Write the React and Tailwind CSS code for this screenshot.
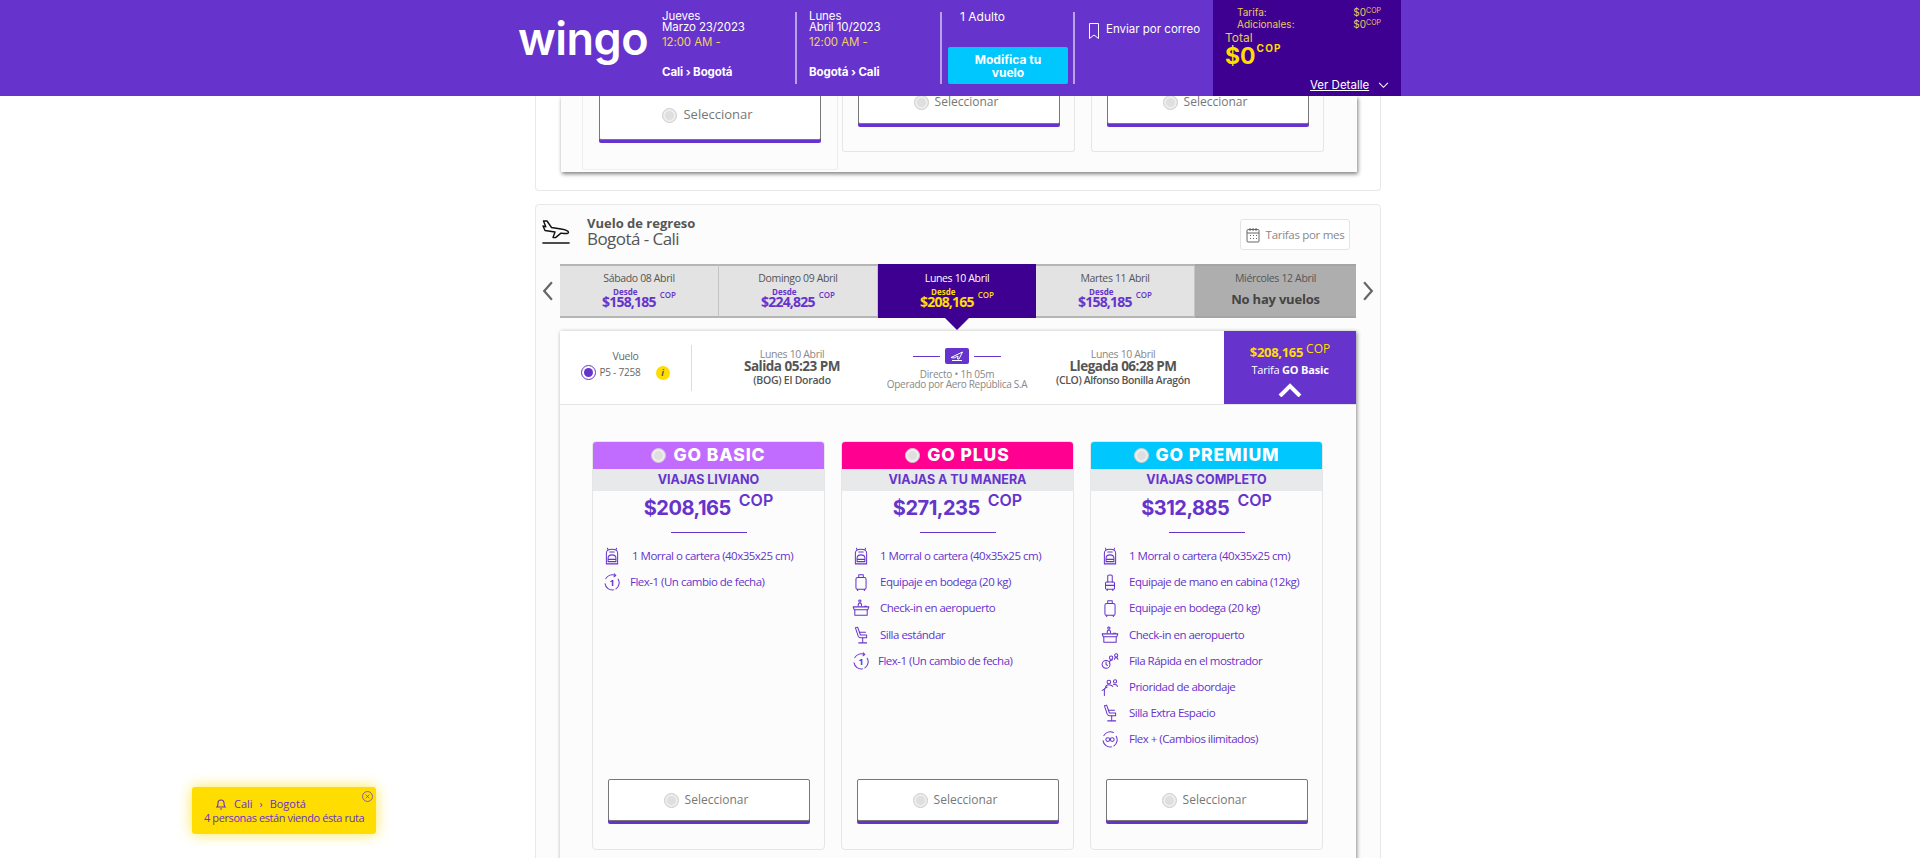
const PURPLE = "#6633cc";

function Ico({ children, className = "w-[18px] h-[18px]" }) {
  return (
    <svg viewBox="0 0 16 16" fill="none" stroke={PURPLE} strokeWidth="0.9" strokeLinecap="round" strokeLinejoin="round" className={className}>
      {children}
    </svg>
  );
}

const Backpack = () => (
  <Ico>
    <path d="M3 5.5C3 3 5 2 8 2s5 1 5 3.5V15H3z" />
    <path d="M4.5 2.5 4 1M11.5 2.5 12 1M6 4.5h4" />
    <path d="M4.5 13V10c0-2 1.5-3 3.5-3s3.5 1 3.5 3v3zM4.5 11h7" />
  </Ico>
);
const Suitcase = () => (
  <Ico>
    <rect x="3.5" y="4" width="9" height="10.5" rx="1.5" />
    <path d="M6 4V1.5h4V4M5 14.5V16M11 14.5V16" />
  </Ico>
);
const CabinBag = () => (
  <Ico>
    <path d="M6 8V2.5C6 1.5 10 1.5 10 2.5V8" />
    <rect x="4" y="8" width="8" height="6.5" rx="1" />
    <path d="M4 11h8M5.5 14.5V16M10.5 14.5V16" />
  </Ico>
);
const Desk = () => (
  <Ico>
    <circle cx="7" cy="1.8" r="1" />
    <path d="M5.5 6c0-1.5.7-2.5 1.5-2.5S8.5 4.5 8.5 6M11 6.5h2" />
    <path d="M1 7h14l-1 2.5H2zM2.5 9.5v5h11v-5" />
  </Ico>
);
const Seat = () => (
  <Ico>
    <path d="M3 1.5 5 1 7.5 8H13v2.5H7.5c-1 0-1.5-.5-2-1.5z" />
    <path d="M6.5 5.5H12M9.5 10.5V14M6 15h7" />
  </Ico>
);
const Flex = ({ label = "1" }) => (
  <Ico>
    <path d="M2.5 5A6.5 6.5 0 0 1 11 2.2M13.5 5.5a6.5 6.5 0 0 1-2 8.6M9.5 15A6.5 6.5 0 0 1 1.8 9.5" />
    <path d="M10 .8 11.4 2.3 9.7 3.4" />
    <text x="8" y="11.5" fontSize="8" fontWeight="700" textAnchor="middle" fill={PURPLE} stroke="none">{label}</text>
  </Ico>
);
const FlexPlus = () => (
  <Ico>
    <path d="M2.5 5A6.5 6.5 0 0 1 11 2.2M13.5 5.5a6.5 6.5 0 0 1-2 8.6M9.5 15A6.5 6.5 0 0 1 1.8 9.5" />
    <circle cx="6" cy="8.5" r="1.7" />
    <circle cx="10" cy="8.5" r="1.7" />
  </Ico>
);
const Fila = () => (
  <Ico>
    <circle cx="4.5" cy="11" r="3.5" />
    <path d="M4.5 9v2l1.2 1" />
    <circle cx="9" cy="5" r="1.5" />
    <circle cx="13.5" cy="3" r="1.4" />
    <path d="M7.5 10c0-2 1-3 2.5-3M12 6.5c0-1 .5-1.5 1.5-1.5s1.5.5 1.5 1.5" />
  </Ico>
);
const Prioridad = () => (
  <Ico>
    <circle cx="7" cy="3.5" r="1.6" />
    <circle cx="12.5" cy="3" r="1.4" />
    <path d="M4 9c0-2 1.5-3 3-3s2.5 .5 3.5 1.5M11 5.5c2 0 3.5 .5 3.5 2M1 11l2-1v5.5M3 9.5 5.5 8" />
  </Ico>
);

function Radio({ size = "w-[15px] h-[15px]" }) {
  return (
    <span className={`${size} shrink-0 rounded-full bg-[#dfdfdf] border border-[#cfcfcf] shadow-[inset_0_0_0_2px_#eeeeee]`} />
  );
}

function SelectButton({ className, textClass = "text-[12px]" }) {
  return (
    <div className={`flex items-center justify-center gap-[6px] pr-[5px] bg-white border border-[#777777] rounded-[2px] shadow-[0_3px_0_#6633cc] ${className}`}>
      <Radio size="w-[15px] h-[15px]" />
      <span className={`${textClass} text-[#777777]`}>Seleccionar</span>
    </div>
  );
}

const fares = [
  {
    name: "GO BASIC",
    tagline: "VIAJAS LIVIANO",
    price: "$208,165",
    color: "bg-[#c26cff]",
    items: [
      [Backpack, "1 Morral o cartera (40x35x25 cm)", "ml-[11px]"],
      [Flex, "Flex-1 (Un cambio de fecha)", "ml-[9px]"],
    ],
  },
  {
    name: "GO PLUS",
    tagline: "VIAJAS A TU MANERA",
    price: "$271,235",
    color: "bg-[#ff0090]",
    items: [
      [Backpack, "1 Morral o cartera (40x35x25 cm)", "ml-[10px]"],
      [Suitcase, "Equipaje en bodega (20 kg)", "ml-[10px]"],
      [Desk, "Check-in en aeropuerto", "ml-[10px]"],
      [Seat, "Silla estándar", "ml-[10px]"],
      [Flex, "Flex-1 (Un cambio de fecha)", "ml-[8px]"],
    ],
  },
  {
    name: "GO PREMIUM",
    tagline: "VIAJAS COMPLETO",
    price: "$312,885",
    color: "bg-[#00c8ff]",
    items: [
      [Backpack, "1 Morral o cartera (40x35x25 cm)", "ml-[10px]"],
      [CabinBag, "Equipaje de mano en cabina (12kg)", "ml-[10px]"],
      [Suitcase, "Equipaje en bodega (20 kg)", "ml-[10px]"],
      [Desk, "Check-in en aeropuerto", "ml-[10px]"],
      [Fila, "Fila Rápida en el mostrador", "ml-[10px]"],
      [Prioridad, "Prioridad de abordaje", "ml-[10px]"],
      [Seat, "Silla Extra Espacio", "ml-[10px]"],
      [FlexPlus, "Flex + (Cambios ilimitados)", "ml-[10px]"],
    ],
  },
];

const days = [
  { label: "Sábado 08 Abril", price: "$158,185", w: "w-[159px]" },
  { label: "Domingo 09 Abril", price: "$224,825", w: "w-[159px]" },
  { label: "Lunes 10 Abril", price: "$208,165", w: "w-[158px]", active: true },
  { label: "Martes 11 Abril", price: "$158,185", w: "w-[159px]" },
  { label: "Miércoles 12 Abril", w: "w-[161px]", empty: true },
];

function DayTab({ day }) {
  const bg = day.active ? "bg-[#3d0090] border-[#3d0090]" : day.empty ? "bg-[#aeaeae] border-[#a5a5a5]" : "bg-[#e3e3e3] border-[#b5b5b5] border-r-[#c4c4c4] border-r";
  return (
    <div className={`${day.w} h-[54px] border-y-2 ${bg} flex flex-col items-center pt-[5px] relative`}>
      <div className={`text-[10.5px] tracking-[-0.35px] leading-[14px] ${day.active ? "text-white" : "text-[#555555]"}`}>{day.label}</div>
      {day.empty ? (
        <div className="text-[13px] font-bold tracking-[-0.2px] text-[#444444] mt-[5px]">No hay vuelos</div>
      ) : (
        <div className={`relative flex items-start gap-[4px] mt-[3px] ${day.active ? "text-[#ffdd00]" : "text-[#6633cc]"}`}>
          <div className="flex flex-col items-center">
            <span className="text-[8px] font-bold leading-[8px] pl-[11px] self-start">Desde</span>
            <span className="text-[14px] font-bold tracking-[-0.8px] leading-[12px]">{day.price}</span>
          </div>
          <span className="text-[8px] font-semibold leading-[8px] mt-[3px]">COP</span>
        </div>
      )}
      {day.active && (
        <span className="absolute left-1/2 -translate-x-1/2 top-[52px] w-0 h-0 border-x-[12px] border-x-transparent border-t-[12px] border-t-[#3d0090]" />
      )}
    </div>
  );
}

function FareCard({ fare }) {
  return (
    <div className="w-[233px] h-[409px] border border-[#e6e6e6] rounded-[4px] bg-[#fcfcfc] flex flex-col overflow-hidden">
      <div className={`${fare.color} h-[27px] flex items-center justify-center gap-[7px] shrink-0`}>
        <Radio />
        <span className="font-['Inter'] text-[17.5px] font-extrabold tracking-[0.9px] text-white whitespace-nowrap">{fare.name}</span>
      </div>
      <div className="h-[22px] shrink-0 bg-[#e8e9eb] flex items-center justify-center font-['Inter'] text-[12.5px] font-bold text-[#6633cc]">
        {fare.tagline}
      </div>
      <div className="flex justify-center items-start text-[#6633cc] font-['Inter'] h-[41px] pt-[1px] shrink-0">
        <span className="text-[20px] font-bold tracking-[-0.5px] leading-[28px] mt-[2px]">{fare.price}</span>
        <span className="text-[16px] font-semibold leading-[16px] ml-[8px]">COP</span>
      </div>
      <div className="w-[76px] h-px bg-[#6633cc] mx-auto shrink-0" />
      <div className="pt-[10px] flex-1">
        {fare.items.map(([Icon, label, gap]) => (
          <div key={label} className="h-[26.2px] flex items-center pl-[10px]">
            <span className="w-[18px] flex justify-center shrink-0"><Icon /></span>
            <span className={`${gap} text-[11.5px] tracking-[-0.5px] leading-[14px] text-[#6633cc] whitespace-nowrap`}>{label}</span>
          </div>
        ))}
      </div>
      <SelectButton className="w-[202px] h-[42px] mx-auto mb-[28px] shrink-0" />
    </div>
  );
}

function TripCol({ day, date, route }) {
  return (
    <div className="text-[11.5px] tracking-[-0.1px] leading-[11px] text-white">
      <div>{day}</div>
      <div>{date}</div>
      <div className="text-[#f0d060] mt-[2px] leading-[14px]">12:00 AM -</div>
      <div className="font-bold mt-[17px] leading-[12px]">{route}</div>
    </div>
  );
}

function Header() {
  return (
    <header className="h-[96px] bg-[#6633cc] flex font-['Inter'] relative z-10">
      <div className="w-[518px]" />
      <div className="w-[144px] text-[45px] font-semibold text-white leading-[45px] pt-[16px] tracking-[-0.5px]">wingo</div>
      <div className="w-[133px] pt-[11px]"><TripCol day="Jueves" date="Marzo 23/2023" route="Cali › Bogotá" /></div>
      <div className="w-[2px] h-[72px] mt-[12px] bg-[#b9a3e8]" />
      <div className="w-[143px] pl-[12px] pt-[11px]"><TripCol day="Lunes" date="Abril 10/2023" route="Bogotá › Cali" /></div>
      <div className="w-[2px] h-[72px] mt-[12px] bg-[#b9a3e8]" />
      <div className="w-[131px] pl-[6px] pt-[11px] text-white text-[12px] leading-[12px]">
        <div className="pl-[12px]">1 Adulto</div>
        <div className="w-[120px] h-[37px] mt-[24px] bg-[#00c8ff] rounded-[2px] flex items-center justify-center text-center text-[12px] leading-[13px] font-bold">
          Modifica tu<br />vuelo
        </div>
      </div>
      <div className="w-[2px] h-[72px] mt-[12px] bg-[#b9a3e8]" />
      <div className="w-[138px] flex items-start gap-[6px] pl-[13px] pt-[23px] text-white text-[11.5px] leading-[12px]">
        <svg viewBox="0 0 12 16" fill="none" stroke="white" strokeWidth="1" className="w-[12px] h-[16px] shrink-0">
          <path d="M1.5.5h9V15.5L6 12l-4.5 3.5z" />
        </svg>
        <span className="whitespace-nowrap">Enviar por correo</span>
      </div>
      <div className="w-[188px] bg-[#3d0090] relative pl-[12px]">
        <div className="pl-[12px] pt-[6px] pr-[20px] text-[10px] leading-[12px] text-[#e8c860]">
          <div className="flex justify-between"><span>Tarifa:</span><span>$0<sup className="text-[7px]">COP</sup></span></div>
          <div className="flex justify-between"><span>Adicionales:</span><span>$0<sup className="text-[7px]">COP</sup></span></div>
        </div>
        <div className="text-[12px] leading-[14px] text-[#e8c860] mt-[1px]">Total</div>
        <div className="flex items-start text-[#ffdd00] font-bold">
          <span className="text-[23px] leading-[22px]">$0</span>
          <span className="text-[10px] leading-[12px] tracking-[1.2px] ml-[1px] mt-[-3px]">COP</span>
        </div>
        <div className="absolute left-[97px] top-[78px] flex items-center gap-[8px] text-white text-[11.5px] leading-[14px]">
          <span className="underline">Ver Detalle</span>
          <svg viewBox="0 0 12 8" fill="none" stroke="white" strokeWidth="1.2" className="w-[11px] h-[7px] ml-[1px]"><path d="M1 1l5 5 5-5" /></svg>
        </div>
      </div>
    </header>
  );
}

function PlaneLanding() {
  return (
    <svg viewBox="0 0 28 24" fill="none" stroke="#111111" strokeWidth="1.4" strokeLinejoin="round" strokeLinecap="round" className="w-[28px] h-[24px]">
      <path d="M1.5 1 5 1 9.5 7.5 19 9c4 .6 7.5 2 7.5 3.5 0 1-2 1.2-4.5 1l-3-.4-5.5 4.5h-2.5L13 12 3 10.5 1 6 3.8 6.8z" />
      <path d="M1 23h26" strokeWidth="1.6" />
    </svg>
  );
}

export default function App() {
  return (
    <div className="relative w-[1920px] h-[858px] overflow-hidden bg-white font-['Open_Sans',sans-serif]">
      <Header />

      <main className="w-[846px] ml-[535px]">
        <section className="h-[95px] border-x border-b border-[#e8e8e8] rounded-b-[4px] bg-white">
          <div className="ml-[25px] w-[796px] h-[76px] flex bg-[#fcfcfc] shadow-[1px_2px_4px_rgba(0,0,0,0.5)] overflow-hidden">
            <div className="ml-[21px] w-[256px] h-[74px] border border-t-0 border-[#eeeeee] rounded-b-[3px] flex flex-col justify-end items-center pb-[29px]">
              <SelectButton className="w-[222px] h-[50px] shrink-0" textClass="text-[13px]" />
            </div>
            <div className="ml-[4px] w-[233px] h-[56px] border border-t-0 border-[#e6e6e6] rounded-b-[3px] flex flex-col justify-end items-center pb-[27px] bg-[#fcfcfc]">
              <SelectButton className="w-[202px] h-[44px] shrink-0" />
            </div>
            <div className="ml-[16px] w-[233px] h-[56px] border border-t-0 border-[#e6e6e6] rounded-b-[3px] flex flex-col justify-end items-center pb-[27px] bg-[#fcfcfc]">
              <SelectButton className="w-[202px] h-[44px] shrink-0" />
            </div>
          </div>
        </section>

        <section className="mt-[13px] h-[700px] border border-[#e8e8e8] rounded-[4px] bg-[#fcfcfc]">
          <div className="h-[59px] flex items-start relative">
            <div className="ml-[6px] mt-[15px]"><PlaneLanding /></div>
            <div className="ml-[17px] mt-[11px] text-[#555555]">
              <div className="text-[13px] font-bold leading-[15px]">Vuelo de regreso</div>
              <div className="text-[17px] tracking-[-0.55px] leading-[15px]">Bogotá - Cali</div>
            </div>
            <div className="absolute left-[704px] top-[14px] w-[110px] h-[31px] bg-white border border-[#e4e4e4] rounded-[3px] flex items-center justify-center gap-[6px] text-[11.5px] tracking-[-0.3px] text-[#888888]">
              <svg viewBox="0 0 14 16" fill="none" stroke="#666666" strokeWidth="1" className="w-[14px] h-[16px]">
                <rect x="1" y="2.5" width="12" height="12.5" rx="1" />
                <path d="M1 6h12M4 1v3M7 1v3M10 1v3M4 8.5h1M7 8.5h1M10 8.5h1M4 11.5h1M7 11.5h1M10 11.5h1" />
              </svg>
              <span className="whitespace-nowrap">Tarifas por mes</span>
            </div>
          </div>

          <div className="flex items-center h-[54px] relative">
            <svg viewBox="0 0 10 18" fill="none" stroke="#666666" strokeWidth="2" className="w-[11px] h-[20px] ml-[6px] shrink-0"><path d="M9 1 2 9l7 8" /></svg>
            <div className="flex ml-[7px]">
              {days.map((d) => <DayTab key={d.label} day={d} />)}
            </div>
            <svg viewBox="0 0 10 18" fill="none" stroke="#666666" strokeWidth="2" className="w-[11px] h-[20px] ml-[7px] shrink-0"><path d="M1 1l7 8-7 8" /></svg>
          </div>

          <div className="mt-[13px] ml-[24px] w-[796px] h-[560px] bg-[#fcfcfc] shadow-[1px_1px_4px_rgba(0,0,0,0.45)]">
            <div className="h-[74px] flex border-b border-[#e4e4e4] bg-white">
              <div className="w-[132px] h-[46px] mt-[14px] border-r border-[#dddddd] flex flex-col items-center text-[#666666]">
                <div className="text-[10.5px] tracking-[-0.3px] leading-[14px] mt-[4px]">Vuelo</div>
                <div className="flex items-center mt-[2px]">
                  <span className="w-[15px] h-[15px] rounded-full border border-[#6633cc] flex items-center justify-center"><span className="w-[9px] h-[9px] rounded-full bg-[#6633cc]" /></span>
                  <span className="text-[10px] tracking-[-0.2px] ml-[3px]">P5 - 7258</span>
                  <span className="w-[14px] h-[14px] rounded-full bg-[#ffdd00] ml-[15px] flex items-center justify-center text-[9px] font-bold italic text-[#555555]">i</span>
                </div>
              </div>
              <div className="w-[200px] flex flex-col items-center pt-[17px] text-[#555555]">
                <div className="text-[10.5px] tracking-[-0.35px] leading-[12px] text-[#888888]">Lunes 10 Abril</div>
                <div className="text-[13.5px] font-bold tracking-[-0.5px] leading-[12px] whitespace-nowrap">Salida 05:23 PM</div>
                <div className="text-[10.5px] font-semibold tracking-[-0.25px] leading-[14px] mt-[1px] whitespace-nowrap">(BOG) El Dorado</div>
              </div>
              <div className="w-[130px] flex flex-col items-center pt-[17px] text-[#888888]">
                <div className="flex items-center gap-[5px]">
                  <span className="w-[27px] h-px bg-[#6633cc]" />
                  <span className="w-[24px] h-[16px] rounded-[2px] bg-[#6633cc] flex items-center justify-center">
                    <svg viewBox="0 0 14 10" className="w-[14px] h-[10px]" fill="none" stroke="white" strokeWidth="1"><path d="M1 6.5 12.5 1 9 8H7.5L8 5 4 7zM2 9.5h10" /></svg>
                  </span>
                  <span className="w-[27px] h-px bg-[#6633cc]" />
                </div>
                <div className="text-[10px] tracking-[-0.2px] leading-[10px] mt-[5px] whitespace-nowrap">Directo • 1h 05m</div>
                <div className="text-[10px] tracking-[-0.32px] leading-[10px] whitespace-nowrap">Operado por Aero República S.A</div>
              </div>
              <div className="w-[202px] flex flex-col items-center pt-[17px] text-[#555555]">
                <div className="text-[10.5px] tracking-[-0.35px] leading-[12px] text-[#888888]">Lunes 10 Abril</div>
                <div className="text-[13.5px] font-bold tracking-[-0.5px] leading-[12px] whitespace-nowrap">Llegada 06:28 PM</div>
                <div className="text-[10.5px] font-semibold tracking-[-0.4px] leading-[14px] mt-[1px] whitespace-nowrap">(CLO) Alfonso Bonilla Aragón</div>
              </div>
              <div className="w-[132px] bg-[#6633cc] flex flex-col items-center pt-[11px]">
                <div className="flex items-start text-[#ffdd00]">
                  <span className="text-[13px] font-bold tracking-[-0.3px] leading-[20px]">$208,165</span>
                  <span className="text-[12px] leading-[14px] ml-[3px]">COP</span>
                </div>
                <div className="text-[11px] tracking-[-0.2px] text-white leading-[16px]">Tarifa <b>GO Basic</b></div>
                <svg viewBox="0 0 24 14" fill="none" stroke="white" strokeWidth="4" className="w-[24px] h-[14px] mt-[5px]"><path d="M2 13 12 3l10 10" /></svg>
              </div>
            </div>
            <div className="flex pt-[36px] pl-[32px] gap-[16px]">
              {fares.map((f) => <FareCard key={f.name} fare={f} />)}
            </div>
          </div>
        </section>
      </main>

      <div className="absolute left-[192px] top-[787px] w-[184px] h-[47px] bg-[#ffdd00] rounded-[3px] shadow-[0_0_14px_rgba(255,221,0,0.7)] text-[#6633cc] text-[11px] leading-[14px]">
        <div className="flex items-center pt-[10px] pl-[23px]">
          <svg viewBox="0 0 12 12" fill="none" stroke="#6633cc" strokeWidth="1.1" className="w-[12px] h-[12px]"><path d="M2 9c1-1 1-2 1-4a3 3 0 0 1 6 0c0 2 0 3 1 4zM5 11h2" /></svg>
          <span className="ml-[7px]">Cali</span>
          <span className="ml-[7px] text-[10px]">›</span>
          <span className="ml-[7px]">Bogotá</span>
        </div>
        <div className="pl-[12px] tracking-[-0.4px] whitespace-nowrap">4 personas están viendo ésta ruta</div>
        <svg viewBox="0 0 12 12" fill="none" stroke="#6633cc" strokeWidth="0.8" className="absolute right-[3px] top-[4px] w-[11px] h-[11px]"><circle cx="6" cy="6" r="5.4" /><path d="M4 4l4 4M8 4l-4 4" /></svg>
      </div>
    </div>
  );
}
